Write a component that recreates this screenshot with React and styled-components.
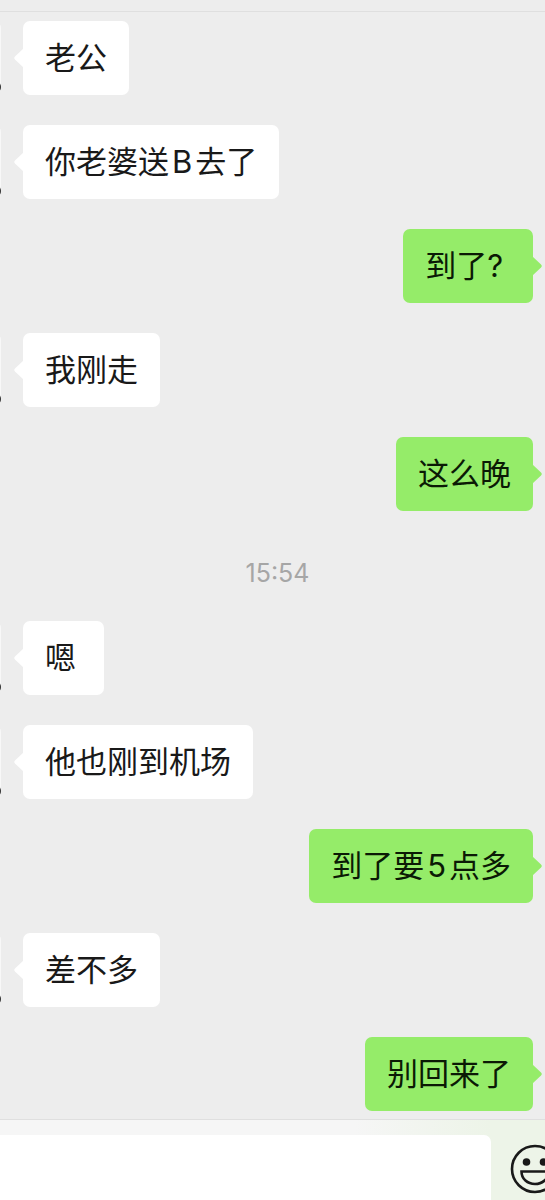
import styled, { createGlobalStyle } from 'styled-components';

const GlobalStyle = createGlobalStyle`
  * {
    box-sizing: border-box;
  }

  body {
    margin: 0;
    background: #ededed;
    font-family: Inter, "Noto Sans CJK SC", sans-serif;
  }
`;

const Page = styled.div`
  display: flex;
  flex-direction: column;
  height: 100vh;
  overflow: hidden;
`;

const Header = styled.header`
  flex: none;
  height: 12px;
  border-bottom: 1px solid #dfdfdf;
`;

const Messages = styled.main`
  flex: 1;
  display: flex;
  flex-direction: column;
  gap: 30px;
  padding: 9px 12px 8px 0;
`;

const Row = styled.div`
  display: flex;
  justify-content: ${props => (props.$mine ? 'flex-end' : 'flex-start')};
`;

const Avatar = styled.svg`
  flex: none;
  width: 74px;
  height: 74px;
  margin-left: -73px;
  margin-right: 22px;
`;

const Bubble = styled.p`
  position: relative;
  min-width: 81px;
  margin: 0;
  padding: 12px 22px 16px;
  border-radius: 7px;
  background: ${props => (props.$mine ? '#95ec69' : '#ffffff')};
  color: ${props => (props.$mine ? '#0b1a05' : '#191919')};
  font-family: "Noto Sans CJK SC", sans-serif;
  font-size: 31px;
  line-height: 46px;
  white-space: nowrap;
`;

const Tail = styled.svg`
  position: absolute;
  top: 27px;
  ${props => (props.$mine ? 'right: -9px; transform: scaleX(-1);' : 'left: -9px;')}
  width: 10px;
  height: 20px;
  fill: ${props => (props.$mine ? '#95ec69' : '#ffffff')};
`;

const Latin = styled.span`
  margin: ${props => (props.$mark ? '0 8px 0 0' : '0 3px')};
  font-family: Inter, sans-serif;
  line-height: 1;
`;

const Time = styled.time`
  padding: 17px 0 3px 22px;
  color: #a6a6a6;
  font-size: 25px;
  line-height: 30px;
  text-align: center;
`;

const Footer = styled.footer`
  flex: none;
  display: flex;
  gap: 18px;
  height: 81px;
  padding-top: 15px;
  border-top: 1px solid #dfdfdf;
  background: linear-gradient(90deg, #f6f6f6 65%, #edf4e8 90%);
`;

const TextBox = styled.input`
  flex: 1;
  min-width: 0;
  height: 74px;
  padding: 0 20px;
  border: 0;
  border-radius: 0 7px 7px 0;
  background: #ffffff;
  font-family: inherit;
  font-size: 31px;
  outline: none;
`;

const EmojiButton = styled.button`
  flex: none;
  width: 50px;
  height: 50px;
  margin: 9px -14px 0 0;
  padding: 0;
  border: 0;
  background: none;
`;

const messages = [
  { text: '老公' },
  { text: '你老婆送B去了' },
  { text: '到了?', mine: true },
  { text: '我刚走' },
  { text: '这么晚', mine: true },
  { time: '15:54' },
  { text: '嗯' },
  { text: '他也刚到机场' },
  { text: '到了要5点多', mine: true },
  { text: '差不多' },
  { text: '别回来了', mine: true },
];

const Message = ({ text, mine }) => {
  return (
    <Row $mine={mine}>
      {!mine && (
        <Avatar viewBox="0 0 74 74" aria-hidden="true">
          <rect width="74" height="74" rx="7" fill="#f8f8f8" />
          <ellipse cx="69" cy="66" rx="5" ry="6" fill="#333333" />
        </Avatar>
      )}
      <Bubble $mine={mine}>
        <Tail $mine={mine} viewBox="0 0 10 20" aria-hidden="true">
          <path d="M10 0 L1 8.5 Q-0.5 10 1 11.5 L10 20 Z" />
        </Tail>
        {text.split(/([A-Z0-9?]+)/).map((part, i) =>
          i % 2 ? <Latin key={i} $mark={part === '?'}>{part}</Latin> : part
        )}
      </Bubble>
    </Row>
  );
};

const App = () => {
  return (
    <Page>
      <GlobalStyle />
      <Header />
      <Messages>
        {messages.map((item, i) =>
          item.time ? (
            <Time key={i}>{item.time}</Time>
          ) : (
            <Message key={i} text={item.text} mine={item.mine} />
          )
        )}
      </Messages>
      <Footer>
        <TextBox type="text" aria-label="消息" />
        <EmojiButton type="button" aria-label="表情">
          <svg width="50" height="50" viewBox="0 0 50 50" fill="none" stroke="#191919" strokeWidth="2.6">
            <circle cx="26" cy="25" r="23" />
            <circle cx="17.5" cy="18" r="3.8" fill="#191919" stroke="none" />
            <circle cx="34.5" cy="18" r="3.8" fill="#191919" stroke="none" />
            <path d="M12.5 27.5 H39.5 C39.5 35 33.5 40 26 40 S12.5 35 12.5 27.5 Z" />
          </svg>
        </EmojiButton>
      </Footer>
    </Page>
  );
};

export default App;
